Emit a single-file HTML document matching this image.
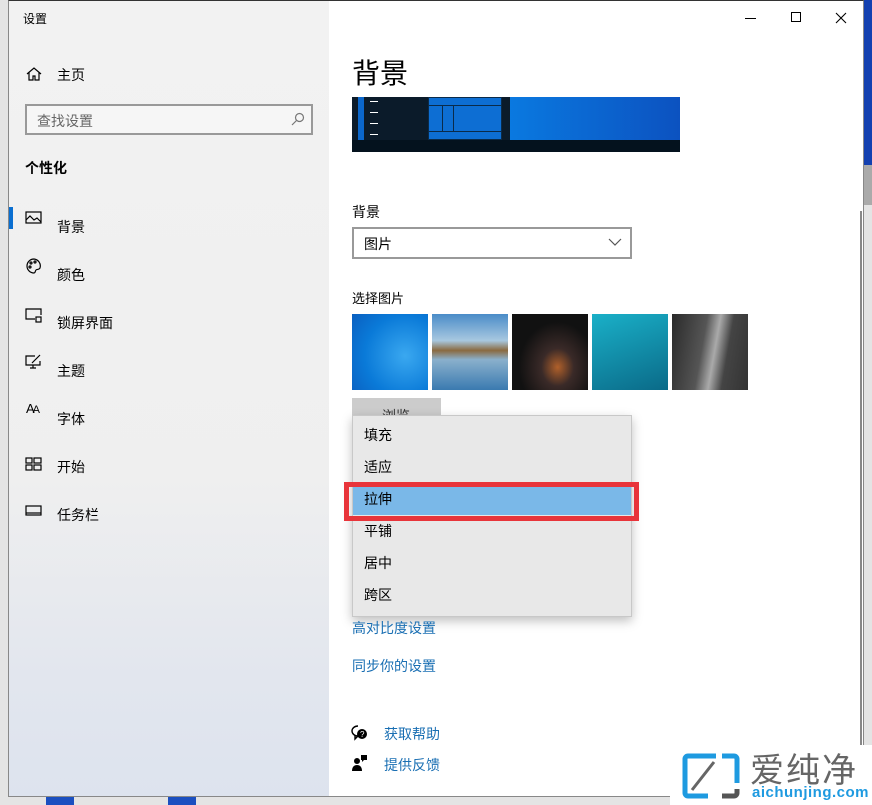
<!DOCTYPE html>
<html><head><meta charset="utf-8"><style>
*{margin:0;padding:0;box-sizing:border-box}
body{width:872px;height:805px;overflow:hidden;background:#e4e4e4;font-family:"Liberation Sans","Noto Sans CJK SC",sans-serif;position:relative;color:#000}
.a{position:absolute}
.win{left:8px;top:0;width:856px;height:797px;background:#fff;border:1px solid #888;border-top:1px solid #333;overflow:hidden}
.side{left:0;top:0;width:320px;height:797px;background:linear-gradient(180deg,#f2f2f2 0%,#efefef 60%,#e2e6ee 85%,#dde3ee 100%)}
.t{font-size:14px;white-space:nowrap}
.nav{left:62px;font-size:14px}
.link{color:#1a6fb3;font-size:14px}
.menu{padding-top:3px}
.menu div{height:32px;line-height:32px;padding-left:11px;font-size:14px}
</style></head><body>
<div class="a" style="left:864px;top:0;width:8px;height:165px;background:#1340b0"></div>
<div class="a" style="left:864px;top:165px;width:8px;height:40px;background:#aaa"></div>
<div class="a" style="left:46px;top:797px;width:28px;height:8px;background:#1b4fc0"></div>
<div class="a" style="left:168px;top:797px;width:28px;height:8px;background:#1b4fc0"></div>
<div class="a win">
 <div class="a side">
  <div class="a t" style="left:14px;top:9px;font-size:12px">设置</div>
  <svg class="a" style="left:17px;top:65px" width="16" height="16" viewBox="0 0 16 16" fill="none" stroke="#000" stroke-width="1.2"><path d="M1 8L8 2l7 6M3 6.5V14h4v-4h2v4h4V6.5"/></svg>
  <div class="a nav" style="top:64px;left:48px">主页</div>
  <div class="a" style="left:16px;top:103px;width:288px;height:31px;border:2px solid #999;background:#f6f6f6"></div>
  <div class="a t" style="left:28px;top:110px;color:#666">查找设置</div>
  <svg class="a" style="left:282px;top:111px" width="14" height="14" viewBox="0 0 14 14" fill="none" stroke="#777" stroke-width="1.2"><circle cx="8.5" cy="5.5" r="4"/><path d="M5.5 8.5L1 13"/></svg>
  <div class="a t" style="left:16px;top:157px;font-weight:bold">个性化</div>
  <div class="a" style="left:0;top:206px;width:4px;height:22px;background:#0a6fd1"></div>
  <svg class="a" style="left:16px;top:210px" width="18" height="14" viewBox="0 0 18 14" fill="none" stroke="#000" stroke-width="1.2"><rect x="1" y="1" width="15" height="11"/><path d="M1 9l4-4 4 4 3-2 4 4"/></svg>
  <div class="a nav" style="top:216px;left:48px">背景</div>
  <svg class="a" style="left:16px;top:256px" width="18" height="18" viewBox="0 0 18 18" fill="none" stroke="#000" stroke-width="1.2"><path d="M9 2a7 7 0 1 0 0 14c1.5 0 1-2 2-3s3 0 4-2A7 7 0 0 0 9 2z"/><circle cx="6" cy="6" r="1"/><circle cx="10" cy="5" r="1"/><circle cx="5" cy="10" r="1"/></svg>
  <div class="a nav" style="top:264px;left:48px">颜色</div>
  <svg class="a" style="left:16px;top:306px" width="18" height="16" viewBox="0 0 18 16" fill="none" stroke="#000" stroke-width="1.2"><path d="M10 12H1V2h15v6"/><rect x="11" y="10" width="5" height="5"/></svg>
  <div class="a nav" style="top:312px;left:48px">锁屏界面</div>
  <svg class="a" style="left:16px;top:352px" width="18" height="16" viewBox="0 0 18 16" fill="none" stroke="#000" stroke-width="1.2"><path d="M10 3H1v9h14V8M5 15h6M8 12v3M7 10l8-8"/></svg>
  <div class="a nav" style="top:360px;left:48px">主题</div>
  <div class="a" style="left:17px;top:400px;font-size:13px;letter-spacing:-2px">A<span style="font-size:11px">A</span></div>
  <div class="a nav" style="top:408px;left:48px">字体</div>
  <svg class="a" style="left:16px;top:456px" width="18" height="14" viewBox="0 0 18 14" fill="none" stroke="#000" stroke-width="1.2"><rect x="1" y="1" width="6" height="5"/><rect x="9" y="1" width="7" height="5"/><rect x="1" y="8" width="6" height="5"/><rect x="9" y="8" width="7" height="5"/></svg>
  <div class="a nav" style="top:456px;left:48px">开始</div>
  <svg class="a" style="left:16px;top:504px" width="18" height="12" viewBox="0 0 18 12" fill="none" stroke="#000" stroke-width="1.2"><rect x="1" y="1" width="15" height="9"/><path d="M1 8h15"/></svg>
  <div class="a nav" style="top:504px;left:48px">任务栏</div>
 </div>
 <div class="a" style="left:736px;top:17px;width:11px;height:1px;background:#000"></div>
 <div class="a" style="left:782px;top:11px;width:10px;height:10px;border:1px solid #000"></div>
 <svg class="a" style="left:826px;top:11px" width="12" height="12"><path d="M1 1l10 10M11 1L1 11" stroke="#000" stroke-width="1.1"/></svg>
 <div class="a" style="left:851px;top:210px;width:2px;height:587px;background:#888"></div>
 <div class="a" style="left:343px;top:51px;font-size:28px">背景</div>
 <div class="a" style="left:343px;top:96px;width:328px;height:55px;background:#04121e">
  <div class="a" style="left:0;top:0;width:328px;height:43px;background:#0b1b2a"></div>
  <div class="a" style="left:6px;top:0;width:6px;height:43px;background:#0b67cc"></div>
  <div class="a" style="left:18px;top:4px;width:8px;height:1px;background:#fff;box-shadow:0 11px 0 #fff,0 22px 0 #fff,0 33px 0 #fff"></div>
  <div class="a" style="left:76px;top:0;width:74px;height:43px;background:#0d6ed3;border:1px solid #0a2b4a"></div>
  <div class="a" style="left:76px;top:8px;width:74px;height:27px;border-top:1px solid #0a2b4a;border-bottom:1px solid #0a2b4a"></div>
  <div class="a" style="left:90px;top:8px;width:12px;height:27px;border-left:1px solid #0a2b4a;border-right:1px solid #0a2b4a"></div>
  <div class="a" style="left:158px;top:0;width:170px;height:43px;background:linear-gradient(90deg,#0a79e0,#0c52c0)"></div>
 </div>
 <div class="a t" style="left:343px;top:201px">背景</div>
 <div class="a" style="left:343px;top:226px;width:280px;height:32px;border:2px solid #999"></div>
 <div class="a t" style="left:355px;top:233px">图片</div>
 <svg class="a" style="left:599px;top:237px" width="14" height="9"><path d="M1 1l6 6 6-6" fill="none" stroke="#555" stroke-width="1.2"/></svg>
 <div class="a t" style="left:343px;top:287px;font-size:13px">选择图片</div>
 <div class="a" style="left:343px;top:313px;width:76px;height:76px;background:radial-gradient(circle at 70% 55%,#3aa8f0,#0a7ad8 60%,#0a5fc0)"></div>
 <div class="a" style="left:423px;top:313px;width:76px;height:76px;background:linear-gradient(180deg,#4a8cc8 0%,#a8c8e0 35%,#8a6a40 48%,#8ab0cc 60%,#3a7ab0 100%)"></div>
 <div class="a" style="left:503px;top:313px;width:76px;height:76px;background:radial-gradient(ellipse at 60% 70%,#b0602a 0%,#3a2a28 25%,#111 60%)"></div>
 <div class="a" style="left:583px;top:313px;width:76px;height:76px;background:linear-gradient(160deg,#1ab0c8,#0a6a88)"></div>
 <div class="a" style="left:663px;top:313px;width:76px;height:76px;background:linear-gradient(100deg,#2a2a2a,#555 40%,#aaa 55%,#444 70%,#333)"></div>
 <div class="a" style="left:343px;top:397px;width:89px;height:20px;background:#ccc;overflow:hidden"><div class="a t" style="left:30px;top:8px;color:#333">浏览</div></div>
 <div class="a" style="left:343px;top:414px;width:280px;height:202px;background:#e8e8e8;border:1px solid #c8c8c8;box-shadow:0 4px 10px rgba(0,0,0,.25)">
  <div class="menu">
   <div>填充</div><div>适应</div><div style="background:#7ab8e8">拉伸</div><div>平铺</div><div>居中</div><div>跨区</div>
  </div>
 </div>
 <div class="a" style="left:335px;top:481px;width:295px;height:39px;border:5px solid #e8343a"></div>
 <div class="a link" style="left:343px;top:617px">高对比度设置</div>
 <div class="a link" style="left:343px;top:655px">同步你的设置</div>
 <svg class="a" style="left:342px;top:724px" width="18" height="16" viewBox="0 0 18 16"><path d="M7 1a6 5 0 1 0 0 10l-3 3V10" fill="none" stroke="#000" stroke-width="1.4"/><circle cx="11" cy="9" r="5" fill="#000"/><text x="9" y="12" font-size="8" fill="#fff" font-family="Liberation Sans">?</text></svg>
 <div class="a link" style="left:375px;top:723px">获取帮助</div>
 <svg class="a" style="left:342px;top:753px" width="18" height="18" viewBox="0 0 18 18"><circle cx="6" cy="7" r="3" fill="#000"/><path d="M1 17c0-4 2-6 5-6s5 2 5 6z" fill="#000"/><path d="M10 1h6v5h-3l-2 2V6h-1z" fill="#000"/></svg>
 <div class="a link" style="left:375px;top:754px">提供反馈</div>
</div>
<div class="a" style="left:670px;top:745px;width:202px;height:60px;background:#fff"></div>
<svg class="a" style="left:682px;top:752px" width="58" height="48" viewBox="0 0 58 48" fill="none"><path d="M34 4H6a3 3 0 0 0-3 3v34a3 3 0 0 0 3 3h20" stroke="#1e9ae0" stroke-width="5"/><path d="M40 4h12a3 3 0 0 1 3 3v24" stroke="#1e9ae0" stroke-width="5"/><path d="M40 44h12a3 3 0 0 0 3-3v-4" stroke="#555" stroke-width="5"/><path d="M10 38L32 10" stroke="#666" stroke-width="3"/></svg>
<div class="a" style="left:750px;top:748px;font-size:34px;color:#666;letter-spacing:2px;font-family:'Noto Sans CJK SC',sans-serif;line-height:40px">爱纯净</div>
<div class="a" style="left:752px;top:784px;font-size:15px;color:#1e9ae0;font-weight:bold;letter-spacing:.5px">aichunjing.com</div>
</body></html>
